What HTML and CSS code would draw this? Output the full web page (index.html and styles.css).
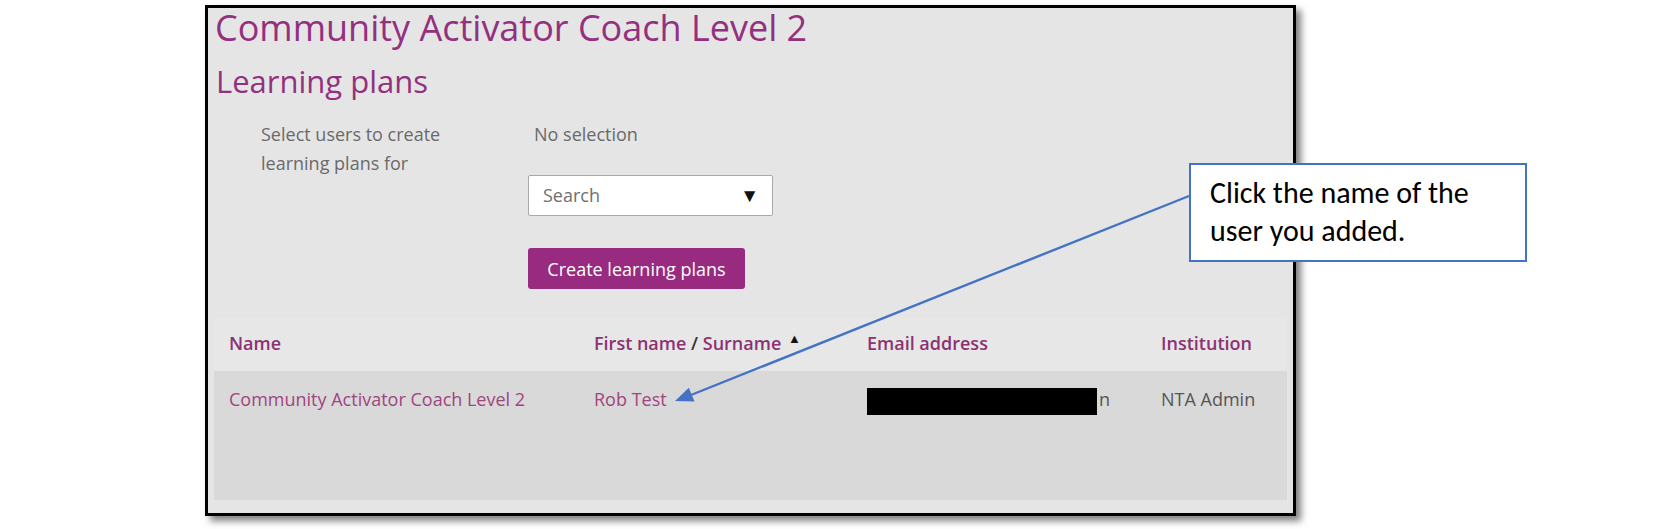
FILE: index.html
```html
<!DOCTYPE html>
<html>
<head>
<meta charset="utf-8">
<link rel="stylesheet" href="styles.css">
</head>
<body>
<div class="frame">
  <h2 class="title">Community Activator Coach Level 2</h2>
  <h3 class="subtitle">Learning plans</h3>
  <div class="form">
    <div class="label">Select users to create<br>learning plans for</div>
    <div class="field">
      <div class="nosel">No selection</div>
      <div class="select"><span>Search</span><span class="caret">▼</span></div>
      <button class="btn">Create learning plans</button>
    </div>
  </div>
  <div class="table">
    <div class="thead">
      <div class="th">Name</div>
      <div class="th">First name <span class="slash">/</span> Surname <span class="sort">▲</span></div>
      <div class="th">Email address</div>
      <div class="th">Institution</div>
    </div>
    <div class="trow">
      <div class="td link">Community Activator Coach Level 2</div>
      <div class="td link">Rob Test</div>
      <div class="td"><span class="redact"></span><span class="tail">n</span></div>
      <div class="td">NTA Admin</div>
    </div>
  </div>
</div>
<div class="callout">Click the name of the<br>user you added.</div>
<svg class="arrow" width="1654" height="529" viewBox="0 0 1654 529">
  <line x1="1189" y1="196" x2="691" y2="395" stroke="#4472c4" stroke-width="2.4"/>
  <polygon points="675,401 694.5,401.5 688.8,387.8" fill="#4472c4"/>
</svg>
</body>
</html>
```
FILE: styles.css
```css
body {
  margin: 0;
  padding: 5px 0 0 205px;
  width: 1654px;
  height: 529px;
  box-sizing: border-box;
  position: relative;
  overflow: hidden;
  background: #fff;
  font-family: "Open Sans", "Noto Sans", sans-serif;
}
.frame {
  box-sizing: border-box;
  width: 1091px;
  height: 511px;
  border: 3px solid #000;
  background: #e5e5e5;
  box-shadow: 5px 5px 7px rgba(0, 0, 0, 0.5);
  display: flex;
  flex-direction: column;
}
.title {
  margin: 0;
  padding-left: 7px;
  font-size: 36px;
  line-height: 40px;
  font-weight: 400;
  color: #93307f;
}
.subtitle {
  margin: 13px 0 0;
  padding-left: 8px;
  font-size: 31px;
  line-height: 40px;
  font-weight: 400;
  color: #93307f;
}
.form {
  display: flex;
  margin-top: 19px;
  padding-left: 53px;
  font-size: 18px;
  line-height: 29px;
  color: #6a6a6a;
}
.label {
  width: 267px;
}
.field {
  display: flex;
  flex-direction: column;
  align-items: flex-start;
}
.nosel {
  padding-left: 6px;
}
.select {
  margin-top: 26px;
  box-sizing: border-box;
  width: 245px;
  height: 41px;
  border: 1px solid #a9a9a9;
  border-radius: 2px;
  background: #fff;
  display: flex;
  align-items: center;
  justify-content: space-between;
  padding: 0 13px 0 14px;
  color: #6f6f6f;
}
.caret {
  color: #111;
  font-size: 19px;
}
.btn {
  margin-top: 32px;
  width: 217px;
  height: 41px;
  background: #982a80;
  color: #fff;
  border: 0;
  border-radius: 3px;
  font-family: "Open Sans", sans-serif;
  font-size: 18px;
  padding: 0;
}
.table {
  margin: 29px 6px 0 6px;
  font-size: 18px;
  line-height: 29px;
}
.thead, .trow {
  display: grid;
  grid-template-columns: 365px 273px 294px 1fr;
  padding-left: 15px;
  box-sizing: border-box;
}
.thead {
  height: 53px;
  padding-top: 10.5px;
  background: #e7e7e7;
}
.th {
  font-weight: 600;
  color: #8c3273;
  white-space: nowrap;
}
.slash {
  color: #333;
}
.sort {
  color: #111;
  font-size: 13px;
  line-height: 0;
  vertical-align: 7px;
  margin-left: 2px;
}
.trow {
  height: 129px;
  background: #d9d9d9;
  padding-top: 14px;
}
.td {
  color: #555;
  white-space: nowrap;
}
.td.link {
  color: #a0457f;
}
.redact {
  display: inline-block;
  width: 230px;
  height: 27px;
  background: #000;
  vertical-align: -9px;
}
.tail {
  margin-left: 2px;
}
.callout {
  position: absolute;
  left: 1189px;
  top: 163px;
  box-sizing: border-box;
  width: 338px;
  height: 99px;
  border: 2px solid #4472c4;
  background: #fff;
  padding: 9px 0 0 19px;
  font-family: Carlito, Lato, sans-serif;
  font-size: 30px;
  line-height: 38px;
  color: #000;
}
.arrow {
  position: absolute;
  left: 0;
  top: 0;
  pointer-events: none;
}
```
